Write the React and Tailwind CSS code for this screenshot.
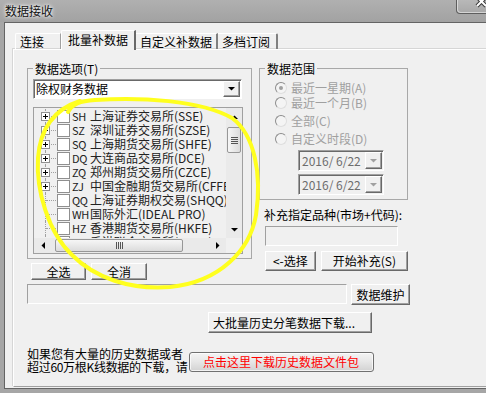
import React from 'react';

const btn =
  'flex items-center justify-center bg-[#f0f0f0] border border-t-white border-l-white border-r-[#696969] border-b-[#696969] shadow-[inset_-1px_-1px_0_#a0a0a0] text-[12px] leading-[12px] text-black whitespace-nowrap';

const sunken = 'border border-t-[#a0a0a0] border-l-[#a0a0a0] border-r-white border-b-white';

const markets = [
  { code: 'SH', name: '上海证券交易所(SSE)', node: true },
  { code: 'SZ', name: '深圳证券交易所(SZSE)', node: true },
  { code: 'SQ', name: '上海期货交易所(SHFE)', node: true },
  { code: 'DQ', name: '大连商品交易所(DCE)', node: true },
  { code: 'ZQ', name: '郑州期货交易所(CZCE)', node: true },
  { code: 'ZJ', name: '中国金融期货交易所(CFFEX)', node: true },
  { code: 'QQ', name: '上海证券期权交易(SHQQ)' },
  { code: 'WH', name: '国际外汇(IDEAL PRO)' },
  { code: 'HZ', name: '香港期货交易所(HKFE)' },
  { code: 'HG', name: '香港联合交易所(HKEX)' },
];

const Arrow = ({ dir, color = '#000' }) => {
  const vert = dir === 'up' || dir === 'down';
  const pts = {
    up: '0,4 7,4 3.5,0.5',
    down: '0,0 7,0 3.5,3.5',
    left: '4,0 4,7 0.5,3.5',
    right: '0,0 0,7 3.5,3.5',
  }[dir];
  return (
    <svg width={vert ? 7 : 4} height={vert ? 4 : 7} viewBox={vert ? '0 0 7 4' : '0 0 4 7'}>
      <polygon points={pts} fill={color} />
    </svg>
  );
};

const TreeRow = ({ item }) => (
  <div className="flex h-[14px] items-center whitespace-nowrap">
    <div className="relative h-full w-[22px] shrink-0">
      <div className="absolute left-[11px] top-0 h-full border-l border-dotted border-[#a0a0a0]" />
      <div className="absolute left-[12px] top-[7px] w-[10px] border-t border-dotted border-[#a0a0a0]" />
      {item.node && (
        <div className="absolute left-[7px] top-[3px] flex h-[9px] w-[9px] items-center justify-center border border-[#919191] bg-white">
          <svg width="5" height="5" viewBox="0 0 5 5">
            <path d="M0 2.5H5M2.5 0V5" stroke="#000" strokeWidth="1" />
          </svg>
        </div>
      )}
    </div>
    <div className="ml-[1px] h-[13px] w-[13px] shrink-0 border border-[#8f8f8f] bg-white" />
    <span className="ml-[2px] inline-block w-[18px] shrink-0 overflow-hidden text-[11px] leading-[14px] tracking-[-0.3px] text-[#222]">
      {item.code}
    </span>
    <span className="text-[12px] leading-[14px] text-[#222]">{item.name}</span>
  </div>
);

const Radio = ({ label, checked }) => (
  <div className="flex h-[12px] items-center whitespace-nowrap">
    <div className="flex h-[12px] w-[12px] shrink-0 items-center justify-center rounded-full border border-t-[#8c8c8c] border-l-[#8c8c8c] border-r-[#dedede] border-b-[#dedede] bg-[#f4f4f4]">
      {checked && <div className="h-[4px] w-[4px] rounded-full bg-[#a0a0a0]" />}
    </div>
    <span className="ml-[4px] text-[12px] leading-[12px] text-[#a0a0a0]">{label}</span>
  </div>
);

const DateBox = ({ className = '' }) => (
  <div
    className={`flex h-[21px] w-[86px] items-center bg-[#f0f0f0] shadow-[inset_1px_1px_0_#696969] ${sunken} ${className}`}
  >
    <span className="pl-[3px] text-[12px] leading-[12px] text-[#6d6d6d] whitespace-pre">2016/ 6/22</span>
    <div className={`ml-auto mr-[1px] h-[17px] w-[17px] ${btn}`}>
      <Arrow dir="down" color="#a0a0a0" />
    </div>
  </div>
);

const Grip = ({ vertical }) =>
  vertical ? (
    <svg width="7" height="7" viewBox="0 0 7 7">
      <path d="M0 0.5H7M0 2.5H7M0 4.5H7M0 6.5H7" stroke="#555" strokeWidth="1" />
    </svg>
  ) : (
    <svg width="7" height="7" viewBox="0 0 7 7">
      <path d="M0.5 0V7M2.5 0V7M4.5 0V7M6.5 0V7" stroke="#555" strokeWidth="1" />
    </svg>
  );

export default function App() {
  return (
    <div className="relative h-[393px] w-[486px] overflow-hidden bg-[#a6a6a6] font-['Noto_Sans_CJK_SC',sans-serif]">
      {/* title bar */}
      <div className="flex h-[22px] overflow-hidden bg-linear-to-b from-[#b0b0b0] to-[#a2a2a2]">
        <div className="pl-[5px] pt-[4px] text-[12px] leading-[13px] text-[#111] [text-shadow:0_0_5px_#fff,0_0_3px_#fff]">
          数据接收
        </div>
        <div className="ml-auto -mr-[13px] h-[14px] w-[43px] rounded-bl-[4px] border border-t-0 border-[#5e5e5e] bg-linear-to-b from-[#b8b8b8] to-[#a8a8a8] shadow-[inset_1px_-1px_0_rgba(255,255,255,0.5)]">
          <svg width="12" height="10" viewBox="0 0 12 10" className="ml-[19px] -mt-[2px] overflow-visible">
            <path d="M1 -1L10 8M10 -1L1 8" stroke="#3a3a3a" strokeWidth="4" />
            <path d="M1 -1L10 8M10 -1L1 8" stroke="#fff" strokeWidth="2" />
          </svg>
        </div>
      </div>

      {/* body */}
      <div className="flex h-[367px]">
        <div className="w-[4px] shrink-0" />
        <div className="flex-1 border-t border-l border-b border-[#646464] bg-[#f0f0f0] pl-[8px] pt-[7px]">
          {/* tabs */}
          <div className="flex h-[19px] items-end pl-[2px] text-[12px] leading-[12px] text-black">
            <div className="h-[16px] w-[46px] rounded-tl-[2px] border-t border-l border-r border-t-white border-l-white border-r-[#a0a0a0] pl-[4px] pt-[2px]">
              连接
            </div>
            <div className="relative z-10 -mb-px h-[20px] w-[75px] rounded-tl-[2px] border-t border-l border-r-2 border-t-white border-l-white border-r-[#696969] bg-[#f0f0f0] pl-[6px] pt-[3px]">
              批量补数据
            </div>
            <div className="h-[16px] w-[82px] border-t border-r-2 border-t-white border-r-[#808080] pl-[4px] pt-[2px]">
              自定义补数据
            </div>
            <div className="h-[16px] w-[60px] rounded-tr-[2px] border-t border-r-2 border-t-white border-r-[#808080] pl-[4px] pt-[2px]">
              多档订阅
            </div>
          </div>

          {/* panel */}
          <div className="h-[338px] w-[480px] border-t border-l border-b border-t-white border-l-white border-b-[#a0a0a0] shadow-[-1px_-1px_0_#d6d6d6] text-[12px] text-black">
            <div className="ml-[13px] mt-[12px] flex items-start">
              {/* left column */}
              <div className="w-[225px]">
                <fieldset className="w-[225px] border border-[#a8a8a8] pb-[4px] pl-[5px]">
                  <legend className="bg-[#f0f0f0] px-[2px] text-[12px] leading-[13px]">数据选项(T)</legend>
                  <div
                    className={`mt-[4px] flex h-[20px] w-[209px] items-stretch bg-white p-[1px] shadow-[inset_1px_1px_0_#696969] ${sunken}`}
                  >
                    <span className="self-center pl-[1px] text-[12px] leading-[12px]">除权财务数据</span>
                    <div className={`ml-auto w-[17px] ${btn}`}>
                      <Arrow dir="down" />
                    </div>
                  </div>
                  <div className="mt-[8px] flex h-[147px] w-[210px] flex-col border border-[#a0a0a0] bg-[#f0f0f0]">
                    <div className="flex min-h-0 flex-1">
                      <div className="min-w-0 flex-1 overflow-hidden pt-[1px]">
                        {markets.map((m) => (
                          <TreeRow key={m.code} item={m} />
                        ))}
                      </div>
                      <div className="flex w-[16px] flex-col bg-[#eaeaea]">
                        <div className="flex h-[17px] items-center justify-center">
                          <Arrow dir="up" />
                        </div>
                        <div className="mx-[1px] mt-[2px] flex h-[26px] items-center justify-center rounded-[2px] border border-[#979797] bg-linear-to-r from-[#f6f6f6] to-[#dcdcdc]">
                          <Grip vertical />
                        </div>
                        <div className="flex-1" />
                        <div className="flex h-[17px] items-center justify-center">
                          <Arrow dir="down" />
                        </div>
                      </div>
                    </div>
                    <div className="flex h-[15px]">
                      <div className="flex flex-1 bg-[#eaeaea]">
                        <div className="flex w-[17px] items-center justify-center">
                          <Arrow dir="left" />
                        </div>
                        <div className="my-[1px] ml-[4px] flex w-[128px] items-center justify-center rounded-[2px] border border-[#979797] bg-linear-to-b from-[#f6f6f6] to-[#dcdcdc]">
                          <Grip />
                        </div>
                        <div className="flex-1" />
                        <div className="flex w-[17px] items-center justify-center">
                          <Arrow dir="right" />
                        </div>
                      </div>
                      <div className="w-[16px] bg-[#f0f0f0]" />
                    </div>
                  </div>
                </fieldset>
                <div className="ml-[4px] mt-[4px] flex gap-[5px]">
                  <div className={`h-[17px] w-[55px] ${btn}`}>全选</div>
                  <div className={`h-[17px] w-[56px] ${btn}`}>全消</div>
                </div>
              </div>

              {/* right column */}
              <div className="ml-[7px] w-[149px]">
                <fieldset className="w-[149px] border border-[#a8a8a8] pb-[4px] pl-[5px]">
                  <legend className="bg-[#f0f0f0] px-[2px] text-[12px] leading-[13px]">数据范围</legend>
                  <div className="mt-[7px] pl-[10px]">
                    <Radio label="最近一星期(A)" checked />
                    <div className="mt-[3px]">
                      <Radio label="最近一个月(B)" />
                    </div>
                    <div className="mt-[6px]">
                      <Radio label="全部(C)" />
                    </div>
                    <div className="mt-[6px]">
                      <Radio label="自定义时段(D)" />
                    </div>
                  </div>
                  <DateBox className="ml-[33px] mt-[5px]" />
                  <DateBox className="ml-[33px] mt-[3px]" />
                </fieldset>
                <div className="ml-[5px] mt-[8px] whitespace-nowrap text-[12px] leading-[13px]">
                  补充指定品种(市场+代码):
                </div>
                <div className={`ml-[6px] mt-[5px] h-[20px] w-[133px] bg-[#f0f0f0] ${sunken}`} />
                <div className="ml-[6px] mt-[5px] flex gap-[5px]">
                  <div className={`h-[20px] w-[51px] ${btn}`}>&lt;-选择</div>
                  <div className={`h-[20px] w-[88px] ${btn}`}>开始补充(S)</div>
                </div>
              </div>
            </div>

            <div className="ml-[13px] mt-[4px] flex items-start gap-[4px]">
              <div className={`h-[20px] w-[320px] bg-[#f0f0f0] ${sunken}`} />
              <div className={`h-[21px] w-[59px] ${btn}`}>数据维护</div>
            </div>

            <div className={`ml-[194px] mt-[7px] h-[21px] w-[164px] !justify-start pl-[4px] ${btn}`}>
              大批量历史分笔数据下载...
            </div>

            <div className="ml-[13px] mt-[14px] flex items-start">
              <div className="w-[162px] shrink-0 whitespace-nowrap text-[12px] leading-[13px]">
                <div>如果您有大量的历史数据或者</div>
                <div className="tracking-[-0.3px]">超过60万根K线数据的下载，请</div>
              </div>
              <div className="mt-[5px] flex h-[20px] w-[185px] items-center rounded-[3px] border border-[#707070] bg-linear-to-b from-[#f4f4f4] via-[#e6e6e6] to-[#d2d2d2] pl-[13px] text-[12px] leading-[12px] text-[#ff0000] shadow-[inset_0_0_0_1px_rgba(255,255,255,0.7)] whitespace-nowrap">
                点击这里下载历史数据文件包
              </div>
            </div>
          </div>
        </div>
      </div>

      {/* hand drawn marker circle */}
      <svg className="pointer-events-none absolute left-0 top-0" width="486" height="393" viewBox="0 0 486 393">
        <path
          d="M68 112 C72 104 80 101 95 100 C140 97 200 100 232 118 C255 135 262 175 256 215 C250 250 220 282 170 287 C130 290 95 278 72 255 C48 232 36 190 38 158 C40 130 52 110 80 101"
          fill="none"
          stroke="#ffff1e"
          strokeWidth="4"
          strokeLinecap="round"
        />
      </svg>
    </div>
  );
}
